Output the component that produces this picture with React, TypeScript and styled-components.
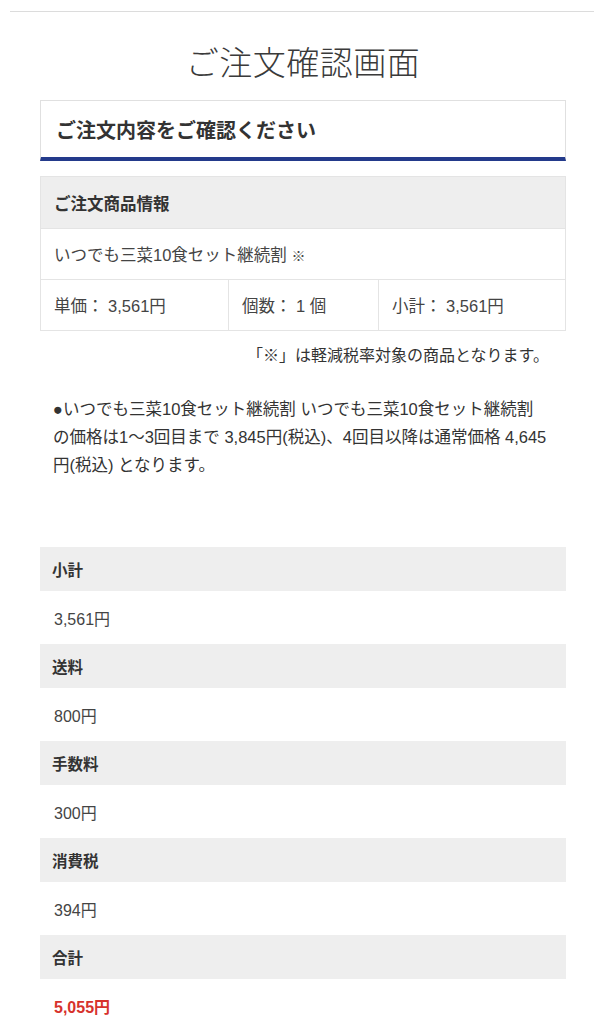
import styled, { createGlobalStyle } from "styled-components";

const GlobalStyle = createGlobalStyle`
  body {
    margin: 0;
    background: #fff;
    font-family: "Liberation Sans", "Noto Sans CJK JP", sans-serif;
    color: #333;
  }
`;

const summary = [
  { label: "小計", value: "3,561円" },
  { label: "送料", value: "800円" },
  { label: "手数料", value: "300円" },
  { label: "消費税", value: "394円" },
  { label: "合計", value: "5,055円", total: true },
];

export default function App() {
  return (
    <>
      <GlobalStyle />
      <Page>
        <TopRule />
        <PageTitle>ご注文確認画面</PageTitle>
        <Content>
          <Heading>
            <HeadingText>ご注文内容をご確認ください</HeadingText>
          </Heading>

          <OrderTable>
            <colgroup>
              <col style={{ width: 188 }} />
              <col style={{ width: 150 }} />
              <col />
            </colgroup>
            <tbody>
              <tr>
                <HeadCell colSpan={3}>ご注文商品情報</HeadCell>
              </tr>
              <tr>
                <Cell colSpan={3}>
                  いつでも三菜10食セット継続割 <Mark>※</Mark>
                </Cell>
              </tr>
              <tr>
                <Cell>単価： 3,561円</Cell>
                <Cell>個数： 1 個</Cell>
                <Cell>小計： 3,561円</Cell>
              </tr>
            </tbody>
          </OrderTable>

          <Note>「※」は軽減税率対象の商品となります。</Note>

          <Description>
            ●いつでも三菜10食セット継続割 いつでも三菜10食セット継続割の価格は1〜3回目まで
            3,845円(税込)、4回目以降は通常価格 4,645円(税込) となります。
          </Description>

          <Summary>
            {summary.map((row) => (
              <SummaryItem key={row.label}>
                <SummaryLabel>{row.label}</SummaryLabel>
                <SummaryValue $total={row.total}>{row.value}</SummaryValue>
              </SummaryItem>
            ))}
          </Summary>
        </Content>
      </Page>
    </>
  );
}

const Page = styled.div`
  padding-top: 11px;
`;

const TopRule = styled.div`
  margin-left: 10px;
  border-top: 1px solid #dcdcdc;
`;

const PageTitle = styled.h1`
  margin: 26px 0 0 12px;
  text-align: center;
  font-family: "Noto Sans CJK JP", sans-serif;
  font-size: 33px;
  line-height: 46px;
  font-weight: 300;
  color: #3a3a3a;
  letter-spacing: 0.5px;
`;

const Content = styled.div`
  margin-left: 40px;
  width: 526px;
  padding-top: 16px;
`;

const Heading = styled.div`
  height: 56px;
  border: 1px solid #e0e0e0;
  border-bottom: 4px solid #233a8b;
  display: flex;
  align-items: center;
  padding-left: 15px;
`;

const HeadingText = styled.h2`
  margin: 0;
  font-size: 20px;
  font-weight: 700;
  color: #333;
`;

const OrderTable = styled.table`
  width: 100%;
  margin-top: 15px;
  border-collapse: collapse;
  table-layout: fixed;
  font-size: 16px;
`;

const HeadCell = styled.th`
  height: 51px;
  padding: 0 13px;
  background: #eeeeee;
  border: 1px solid #e4e4e4;
  text-align: left;
  font-weight: 700;
  font-size: 16.5px;
`;

const Cell = styled.td`
  height: 50px;
  padding: 0 13px;
  border: 1px solid #e4e4e4;
  font-size: 16.5px;
  color: #444;
  white-space: nowrap;
`;

const Mark = styled.span`
  font-size: 14px;
`;

const Note = styled.p`
  margin: 13px 17px 0 0;
  text-align: right;
  font-size: 16px;
  line-height: 24px;
  color: #333;
`;

const Description = styled.p`
  margin: 27px 0 0;
  padding: 0 18px 0 13px;
  font-size: 16.5px;
  line-height: 28px;
  color: #333;
`;

const Summary = styled.dl`
  margin: 68px 0 0;
`;

const SummaryItem = styled.div`
  display: flex;
  flex-direction: column;
`;

const SummaryLabel = styled.dt`
  height: 44px;
  display: flex;
  align-items: center;
  padding-left: 12px;
  background: #eeeeee;
  font-size: 15.5px;
  font-weight: 700;
  color: #333;
`;

const SummaryValue = styled.dd<{ $total?: boolean }>`
  margin: 0;
  height: 53px;
  display: flex;
  align-items: center;
  padding-left: 14px;
  font-size: 16px;
  font-weight: ${(p) => (p.$total ? 700 : 400)};
  color: ${(p) => (p.$total ? "#d7322c" : "#444")};
`;
